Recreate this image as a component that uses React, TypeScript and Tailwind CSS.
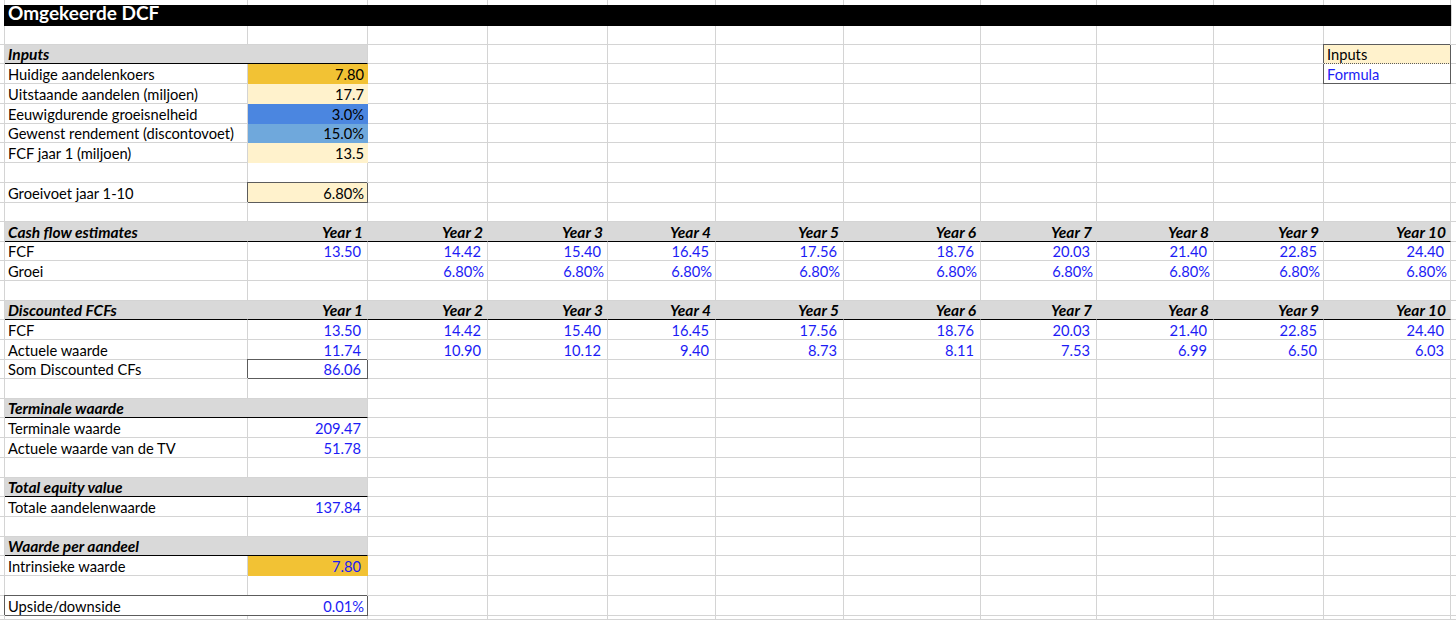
import clsx from 'clsx'
import type { ReactNode } from 'react'

// kolombreedtes A..K (incl. rechter rasterlijn)
const COLS = [
  'w-[243px]',
  'w-[120px]',
  'w-[120px]',
  'w-[120px]',
  'w-[108px]',
  'w-[128px]',
  'w-[137px]',
  'w-[116px]',
  'w-[117px]',
  'w-[110px]',
  'w-[127px]',
]

const GRID = 'border-[#d4d4d4]'
const BLUE = 'text-[#1c1cf5]'
const HEAD = 'text-[15.5px] font-bold italic'

const fcf = ['13.50', '14.42', '15.40', '16.45', '17.56', '18.76', '20.03', '21.40', '22.85', '24.40']
const groei = ['', '6.80%', '6.80%', '6.80%', '6.80%', '6.80%', '6.80%', '6.80%', '6.80%', '6.80%']
const actueel = ['11.74', '10.90', '10.12', '9.40', '8.73', '8.11', '7.53', '6.99', '6.50', '6.03']

type CellProps = {
  w: string
  className?: string
  children?: ReactNode
  right?: boolean
}

function Cell({ w, className, children, right }: CellProps) {
  return (
    <div
      className={clsx(
        'flex shrink-0 items-center overflow-hidden whitespace-nowrap border-r border-b',
        right ? 'justify-end' : 'justify-start pl-[3px]',
        w,
        className ?? GRID,
      )}
    >
      {children}
    </div>
  )
}

function Row({ h = 'h-5', children }: { h?: string; children?: ReactNode }) {
  return (
    <div className={clsx('flex', h)}>
      <div className={clsx('w-[5px] shrink-0 border-r border-b', GRID)} />
      {children}
      <div className={clsx('flex-1 border-b', GRID)} />
    </div>
  )
}

function Empty({ from = 0, to = 11 }: { from?: number; to?: number }) {
  return (
    <>
      {COLS.slice(from, to).map((w, i) => (
        <Cell key={i} w={w} />
      ))}
    </>
  )
}

function EmptyRow({ h = 'h-5' }: { h?: string }) {
  return (
    <Row h={h}>
      <Empty />
    </Row>
  )
}

// grijze kop over kolom A en B
function SmallHeader({ title, h = 'h-[19px]' }: { title: string; h?: string }) {
  return (
    <Row h={h}>
      <Cell w="w-[363px]" className={clsx('border-b-black border-r-[#d4d4d4] bg-[#d9d9d9]', HEAD)}>
        {title}
      </Cell>
      <Empty from={2} />
    </Row>
  )
}

// grijze kop over de hele breedte, met jaartallen
function YearHeader({ title, h = 'h-5' }: { title: string; h?: string }) {
  return (
    <Row h={h}>
      <Cell w={COLS[0]} className={clsx('border-r-[#d9d9d9] border-b-black bg-[#d9d9d9]', HEAD)}>
        {title}
      </Cell>
      {COLS.slice(1).map((w, i) => (
        <Cell
          key={i}
          w={w}
          right
          className={clsx(
            'border-b-black bg-[#d9d9d9] pr-[4px]',
            HEAD,
            i === 9 ? 'border-r-[#d4d4d4]' : 'border-r-[#d9d9d9]',
          )}
        >
          Year {i + 1}
        </Cell>
      ))}
    </Row>
  )
}

function YearRow({ label, values, h = 'h-5' }: { label: string; values: string[]; h?: string }) {
  return (
    <Row h={h}>
      <Cell w={COLS[0]}>{label}</Cell>
      {COLS.slice(1).map((w, i) => (
        <Cell
          key={i}
          w={w}
          right
          className={clsx(GRID, BLUE, values[i].endsWith('%') ? 'pr-[3px]' : 'pr-[6px]')}
        >
          {values[i]}
        </Cell>
      ))}
    </Row>
  )
}

// label + waarde in kolom B
function ValueRow({
  label,
  value,
  h = 'h-5',
  valueClass,
  boxed,
}: {
  label: string
  value: string
  h?: string
  valueClass: string
  boxed?: boolean
}) {
  return (
    <Row h={h}>
      <Cell w={COLS[0]}>{label}</Cell>
      <Cell
        w={COLS[1]}
        right
        className={clsx(valueClass, boxed && 'border-[#5c5c5c] shadow-[-1px_-1px_0_0_#5c5c5c]')}
      >
        {value}
      </Cell>
      <Empty from={2} />
    </Row>
  )
}

export default function App() {
  return (
    <div className="h-[620px] w-[1456px] overflow-hidden bg-white font-['Lato',sans-serif] text-[14.7px] leading-[18px] text-black">
      {/* bovenrand */}
      <div className="flex h-[5px]">
        <div className={clsx('w-[5px] shrink-0 border-r', GRID)} />
        {COLS.map((w, i) => (
          <div key={i} className={clsx('shrink-0 border-r', w, GRID)} />
        ))}
      </div>

      {/* titel */}
      <div className="flex h-[21px]">
        <div className="w-[4px] shrink-0" />
        <div className="flex w-[1447px] shrink-0 items-center bg-black pb-[5px] pl-[4px] text-[19px] font-bold text-white">
          Omgekeerde DCF
        </div>
        <div className={clsx('flex-1 border-l', GRID)} />
      </div>

      <EmptyRow h="h-[19px]" />

      {/* Inputs */}
      <Row h="h-[19px]">
        <Cell w="w-[363px]" className={clsx('border-b-black border-r-[#d4d4d4] bg-[#d9d9d9]', HEAD)}>
          Inputs
        </Cell>
        <Empty from={2} to={10} />
        <Cell
          w={COLS[10]}
          className="border-r-[#5c5c5c] border-b-[#5c5c5c] bg-[#fff2cc] shadow-[-1px_-1px_0_0_#5c5c5c] [border-bottom-style:dotted]"
        >
          Inputs
        </Cell>
      </Row>
      <Row>
        <Cell w={COLS[0]}>Huidige aandelenkoers</Cell>
        <Cell w={COLS[1]} right className="border-[#f2c234] bg-[#f2c234] pr-[3px]">
          7.80
        </Cell>
        <Empty from={2} to={10} />
        <Cell w={COLS[10]} className={clsx('border-[#5c5c5c] shadow-[-1px_0_0_0_#5c5c5c]', BLUE)}>
          Formula
        </Cell>
      </Row>
      <ValueRow
        label="Uitstaande aandelen (miljoen)"
        value="17.7"
        valueClass="border-[#fff2cc] bg-[#fff2cc] pr-[3px]"
      />
      <ValueRow label="Eeuwigdurende groeisnelheid" value="3.0%" valueClass="border-[#4b86e0] bg-[#4b86e0] pr-[3px]" />
      <ValueRow
        label="Gewenst rendement (discontovoet)"
        value="15.0%"
        h="h-[19px]"
        valueClass="border-[#6fa8dc] bg-[#6fa8dc] pr-[3px]"
      />
      <ValueRow label="FCF jaar 1 (miljoen)" value="13.5" valueClass="border-[#fff2cc] bg-[#fff2cc] pr-[3px]" />
      <EmptyRow />
      <ValueRow label="Groeivoet jaar 1-10" value="6.80%" valueClass="bg-[#fff2cc] pr-[3px]" boxed />
      <EmptyRow h="h-[19px]" />

      {/* Cash flow estimates */}
      <YearHeader title="Cash flow estimates" />
      <YearRow label="FCF" values={fcf} h="h-[19px]" />
      <YearRow label="Groei" values={groei} />
      <EmptyRow />

      {/* Discounted FCFs */}
      <YearHeader title="Discounted FCFs" h="h-[19px]" />
      <YearRow label="FCF" values={fcf} />
      <YearRow label="Actuele waarde" values={actueel} />
      <ValueRow
        label="Som Discounted CFs"
        value="86.06"
        h="h-[19px]"
        valueClass={clsx(BLUE, 'pr-[6px]')}
        boxed
      />
      <EmptyRow />

      <SmallHeader title="Terminale waarde" />
      <ValueRow label="Terminale waarde" value="209.47" valueClass={clsx(GRID, BLUE, 'pr-[6px]')} />
      <ValueRow label="Actuele waarde van de TV" value="51.78" valueClass={clsx(GRID, BLUE, 'pr-[6px]')} />
      <EmptyRow />

      <SmallHeader title="Total equity value" />
      <ValueRow label="Totale aandelenwaarde" value="137.84" valueClass={clsx(GRID, BLUE, 'pr-[6px]')} />
      <EmptyRow />

      <SmallHeader title="Waarde per aandeel" />
      <ValueRow
        label="Intrinsieke waarde"
        value="7.80"
        valueClass={clsx('border-[#f2c234] bg-[#f2c234] pr-[6px]', BLUE)}
      />
      <EmptyRow />

      {/* Upside/downside */}
      <Row>
        <div className="flex w-[363px] shrink-0 items-center justify-between border-r border-b border-[#5c5c5c] pr-[3px] pl-[3px] shadow-[-1px_-1px_0_0_#5c5c5c]">
          <span>Upside/downside</span>
          <span className={BLUE}>0.01%</span>
        </div>
        <Empty from={2} />
      </Row>
      <EmptyRow h="h-[4px]" />
    </div>
  )
}
